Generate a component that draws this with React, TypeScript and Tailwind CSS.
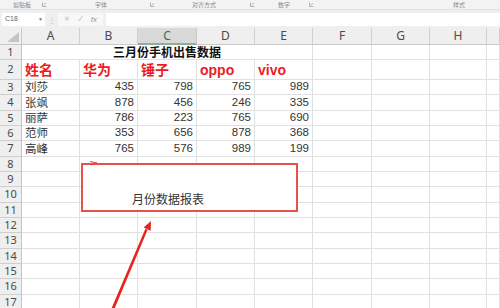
const COLS = ['A', 'B', 'C', 'D', 'E', 'F', 'G', 'H', '']
const COL_W = ['w-[58px]', 'w-[58px]', 'w-[59px]', 'w-[58px]', 'w-[58px]', 'w-[59px]', 'w-[58px]', 'w-[57px]', 'flex-1']

const DATA: [string, number, number, number, number][] = [
  ['刘莎', 435, 798, 765, 989],
  ['张飒', 878, 456, 246, 335],
  ['丽萨', 786, 223, 765, 690],
  ['范师', 353, 656, 878, 368],
  ['高峰', 765, 576, 989, 199],
]

const cjk = { fontFamily: '"Noto Sans CJK SC", sans-serif' }
const num = { fontFamily: '"Liberation Sans", "Noto Sans CJK SC", sans-serif' }

function Launcher() {
  return (
    <svg width="5" height="5" viewBox="0 0 5 5" className="shrink-0">
      <path d="M0.5 0.5 V4.5 H4.5 M1.5 3.5 L4 1" stroke="#9a9a9a" strokeWidth="0.7" fill="none" />
    </svg>
  )
}

function Ribbon() {
  return (
    <div className="h-[10px] flex bg-[#f3f3f3] border-b border-[#e2e2e2] text-[6px] leading-none text-[#8a8a8a]" style={cjk}>
      <div className="w-[50px] flex items-center pl-[13px] pr-[3px]">
        <span>剪贴板</span>
        <span className="ml-auto"><Launcher /></span>
      </div>
      <div className="w-[108px] flex items-center pl-[45px] pr-[3px]">
        <span>字体</span>
        <span className="ml-auto"><Launcher /></span>
      </div>
      <div className="w-[98px] flex items-center pl-[34px] pr-[1px]">
        <span>对齐方式</span>
        <span className="ml-auto"><Launcher /></span>
      </div>
      <div className="w-[61px] flex items-center pl-[22px] pr-[3px]">
        <span>数字</span>
        <span className="ml-auto"><Launcher /></span>
      </div>
      <div className="flex-1 flex items-center pl-[136px]">
        <span>样式</span>
      </div>
    </div>
  )
}

function FormulaBar() {
  return (
    <div className="h-[18px] flex items-center bg-[#efefef] pt-[1px]">
      <div className="ml-[2px] w-[43px] h-[13px] bg-white flex items-center pl-[3px] pr-[2px] text-[7px] text-[#666]" style={num}>
        <span>C18</span>
        <span className="ml-auto text-[5px] text-[#777]">▼</span>
      </div>
      <div className="w-[13px] flex justify-center text-[8px] text-[#b5b5b5] leading-none">⋮</div>
      <div className="w-[45px] h-[13px] bg-[#f8f8f8] flex items-center text-[7px] text-[#bbb]" style={num}>
        <span className="pl-[6px]">✕</span>
        <span className="pl-[8px]">✓</span>
        <span className="pl-[8px] italic text-[#999] text-[8px]">fx</span>
      </div>
      <div className="ml-[3px] flex-1 h-[13px] bg-white" />
    </div>
  )
}

function HeaderRow() {
  return (
    <div className="h-[17px] flex">
      <div className="w-[22px] bg-[#efefef] border-r border-b border-[#c9c9c9] flex items-end justify-end pr-[2px] pb-[2px]">
        <svg width="12" height="10" viewBox="0 0 12 10">
          <polygon points="12,0 12,10 0,10" fill="#c4c4c4" />
        </svg>
      </div>
      {COLS.map((c, i) => (
        <div
          key={i}
          className={
            c === 'C'
              ? `${COL_W[i]} bg-[#d9d9d9] border-r border-[#c9c9c9] border-b-2 border-b-[#8fae98] flex items-center justify-center text-[12px] text-[#3d6b4c]`
              : `${COL_W[i]} bg-[#efefef] border-r border-b border-[#d0d0d0] border-b-[#c9c9c9] flex items-center justify-center text-[12px] text-[#4a4a4a]`
          }
          style={{ fontFamily: '"Noto Sans", sans-serif' }}
        >
          {c}
        </div>
      ))}
    </div>
  )
}

function RowHead({ n }: { n: number }) {
  return (
    <div className="w-[22px] shrink-0 bg-[#efefef] border-r border-b border-[#cfcfcf] border-r-[#c4c4c4] flex items-center justify-center text-[11px] text-[#4a4a4a]" style={{ fontFamily: '"Noto Sans", sans-serif' }}>
      {n}
    </div>
  )
}

function Cell({ i, children, right }: { i: number; children?: React.ReactNode; right?: boolean }) {
  return (
    <div className={`${COL_W[i]} shrink-0 border-r border-b border-[#e1e1e1] flex items-center overflow-visible whitespace-nowrap ${right ? 'justify-end pr-[3px]' : 'pl-[3px]'}`}>
      {children}
    </div>
  )
}

function EmptyCells({ from }: { from: number }) {
  return (
    <>
      {COL_W.slice(from).map((_, k) => (
        <Cell key={k + from} i={k + from} />
      ))}
    </>
  )
}

export default function App() {
  const reds = ['姓名', '华为', '锤子', 'oppo', 'vivo']
  const empties = Array.from({ length: 10 }, (_, k) => k + 8)

  return (
    <div className="w-[500px] h-[308px] overflow-hidden bg-white relative">
      <Ribbon />
      <FormulaBar />
      <HeaderRow />

      <div className="relative">
        {/* row 1: merged title */}
        <div className="h-[15px] flex">
          <RowHead n={1} />
          <div className="w-[291px] shrink-0 border-r border-b border-[#e1e1e1] flex items-center justify-center text-[12px] font-bold text-[#111]" style={cjk}>
            三月份手机出售数据
          </div>
          <EmptyCells from={5} />
        </div>

        {/* row 2: red headings */}
        <div className="h-[20px] flex">
          <RowHead n={2} />
          {reds.map((t, i) => (
            <Cell key={t} i={i}>
              <span className="text-[14px] font-bold text-[#ec1c24] leading-none" style={{ fontFamily: '"Liberation Sans", "Noto Sans CJK SC", sans-serif' }}>{t}</span>
            </Cell>
          ))}
          <EmptyCells from={5} />
        </div>

        {DATA.map((r, k) => (
          <div key={r[0]} className="h-[15.35px] flex text-[11.5px] text-[#333]">
            <RowHead n={k + 3} />
            <Cell i={0}><span className="leading-none" style={cjk}>{r[0]}</span></Cell>
            {r.slice(1).map((v, j) => (
              <Cell key={j} i={j + 1} right>
                <span className="leading-none" style={num}>{v}</span>
              </Cell>
            ))}
            <EmptyCells from={5} />
          </div>
        ))}

        {empties.map(n => (
          <div key={n} className="h-[15.35px] flex">
            <RowHead n={n} />
            <EmptyCells from={0} />
          </div>
        ))}

        {/* text box */}
        <div className="absolute left-[81px] top-[118px] w-[217px] h-[49px] bg-white ring-2 ring-inset ring-[#e8504a] pl-[51px] pt-[23px]">
          <span className="text-[12px] text-[#333] leading-none" style={cjk}>月份数据报表</span>
        </div>
      </div>

      {/* arrows drawn over the sheet */}
      <svg className="absolute inset-0 pointer-events-none" width="500" height="308" viewBox="0 0 500 308">
        <path d="M90 161.5 L97 163 L91 165" stroke="#e4413b" strokeWidth="1" fill="none" />
        <path d="M110 312 L112.8 312.8 L147.6 229.8 L145.4 228.8 Z" fill="#e8231d" />
        <polygon points="151,221 150.7,230.8 143.6,227.6" fill="#e8231d" />
      </svg>
    </div>
  )
}
